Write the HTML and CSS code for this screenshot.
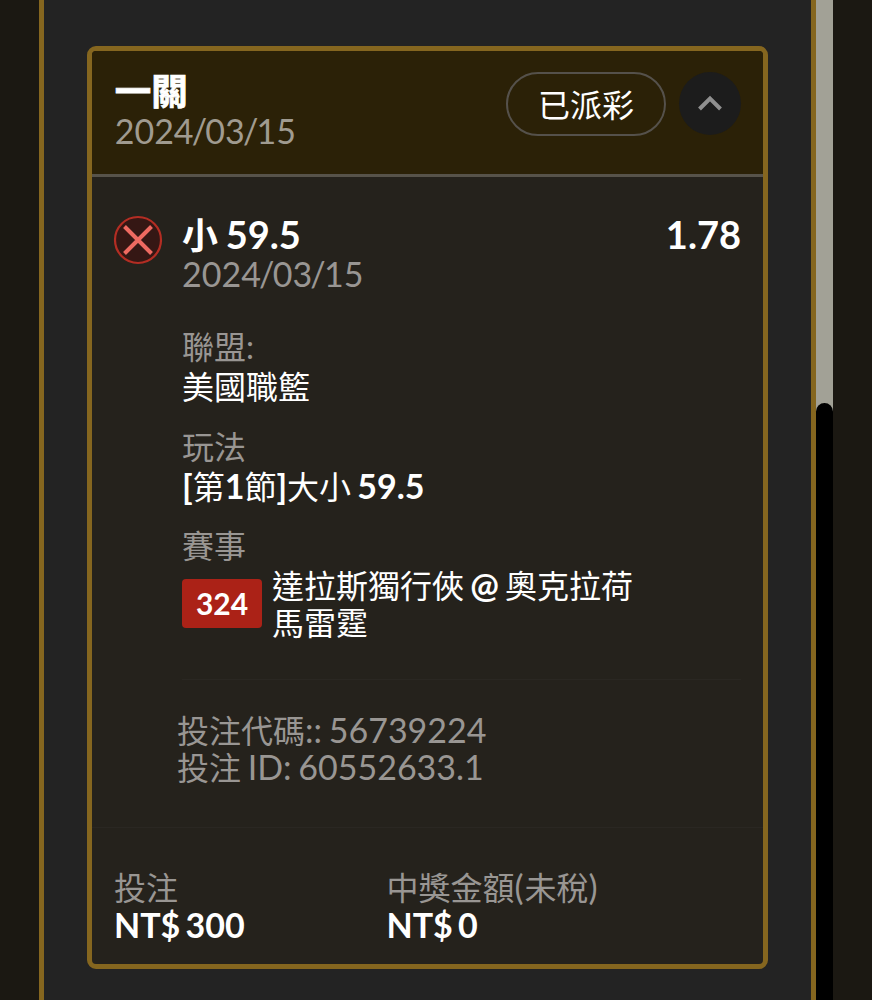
FILE: index.html
```html
<!DOCTYPE html>
<html lang="zh-Hant">
<head>
    <meta charset="UTF-8">
    <meta name="viewport" content="width=device-width, initial-scale=1.0">
    <title>投注</title>
    <link rel="stylesheet" href="styles.css">
</head>
<body>
    <main class="page">
        <div class="panel">
            <div class="card">
                <div class="card-head">
                    <div class="head-text">
                        <h1>一關</h1>
                        <p class="date">2024<i>/</i>03<i>/</i>15</p>
                    </div>
                    <span class="status">已派彩</span>
                    <button class="toggle">
                        <svg width="24" height="18" viewBox="0 0 24 18"><path d="M1.500 14 12 3.500l10.500 10.500" fill="none" stroke="#8f8f8f" stroke-width="4"/></svg>
                    </button>
                </div>

                <div class="bet">
                    <svg class="lost" width="50" height="50" viewBox="0 0 50 50">
                        <circle cx="25" cy="25" r="23" fill="#351714" stroke="#b32d23" stroke-width="2.200"/>
                        <path d="M11.500 11.500l27 27M38.500 11.500l-27 27" stroke="#ee6a61" stroke-width="4"/>
                    </svg>
                    <div class="bet-info">
                        <div class="bet-title">
                            <h2>小 <span class="num">59.5</span></h2>
                            <span class="odds">1.78</span>
                        </div>
                        <p class="date">2024<i>/</i>03<i>/</i>15</p>

                        <dl class="detail">
                            <dt>聯盟:</dt>
                            <dd>美國職籃</dd>
                            <dt>玩法</dt>
                            <dd><b>[</b>第<b>1</b>節<b>]</b>大小 <b>59.5</b></dd>
                            <dt>賽事</dt>
                            <dd class="match">
                                <span class="tag">324</span>
                                <span class="teams">達拉斯獨行俠 <b>@</b> 奧克拉荷<br>馬雷霆</span>
                            </dd>
                        </dl>

                        <div class="ids">
                            <p>投注代碼<span class="num">:: 56739224</span></p>
                            <p>投注<span class="num"> ID: 60552633.1</span></p>
                        </div>
                    </div>
                </div>

                <div class="card-foot">
                    <div class="stake">
                        <p>投注</p>
                        <strong>NT$ 300</strong>
                    </div>
                    <div class="prize">
                        <p>中獎金額<span class="num">(</span>未稅<span class="num">)</span></p>
                        <strong>NT$ 0</strong>
                    </div>
                </div>
            </div>
        </div>
        <div class="scroll">
            <div class="scroll-thumb"></div>
        </div>
    </main>
</body>
</html>
```
FILE: styles.css
```css
* {
    margin: 0;
    padding: 0;
    box-sizing: border-box;
}

body {
    background-color: #1b1812;
    color: #fff;
    font-family: Lato, "Noto Sans CJK TC", sans-serif;
    font-size: 32px;
    line-height: 37px;
    word-spacing: -2px;
}

.page {
    display: flex;
    height: 1000px;
    padding-left: 39px;
    overflow: hidden;
}

.panel {
    width: 777px;
    padding: 46px 43px 0;
    background-color: #232323;
    border: solid #85661f;
    border-width: 0 5px;
}

.card {
    height: 923px;
    background-color: #25221c;
    border: 5px solid #85661f;
    border-radius: 9px;
    overflow: hidden;
}

.card-head {
    display: flex;
    height: 126px;
    padding: 20px 22px 0 22.7px;
    background-color: #2b2107;
    border-bottom: 3px solid #57534a;
}

.head-text {
    flex: 1;
}

h1 {
    font-size: 36.5px;
    line-height: 40px;
    -webkit-text-stroke: 0.8px #fff;
}

.date {
    color: #a09b90;
    font-size: 34px;
    line-height: 40px;
}

.date i {
    margin: 0 -1.8px;
    font-style: normal;
}

.status {
    width: 160px;
    height: 64px;
    margin: 1px 13px 0 0;
    border: 2px solid #55514b;
    border-radius: 32px;
    line-height: 61px;
    text-align: center;
}

.toggle {
    display: flex;
    align-items: center;
    justify-content: center;
    width: 62px;
    height: 63px;
    margin-top: 1px;
    background-color: #1c1c1c;
    border: none;
    border-radius: 50%;
}

.bet {
    display: flex;
    height: 651px;
    padding: 38px 22px 0 21px;
    border-bottom: 1px solid #2a2722;
}

.lost {
    flex: none;
    margin-right: 19px;
}

.bet-info {
    flex: 1;
}

.bet-title {
    display: flex;
    justify-content: space-between;
    height: 39px;
}

h2,
.odds {
    font-size: 38px;
    font-weight: bold;
    line-height: 38px;
}

h2 {
    font-size: 36px;
    line-height: 40px;
    word-spacing: -1px;
}

h2 .num {
    font-size: 38px;
}

.bet .date {
    color: #999693;
}

.num,
b {
    font-size: 34px;
    line-height: 1;
}

.detail {
    padding-top: 33px;
}

dt {
    color: #999693;
    line-height: 40px;
}

dd {
    height: 59.5px;
    line-height: 40px;
}

.match {
    display: flex;
    height: 114px;
    border-bottom: 1px solid #2a2722;
}

.tag {
    width: 80px;
    height: 49px;
    margin: 13px 10px 0 0;
    background-color: #ab2217;
    border-radius: 4px;
    font-size: 30px;
    font-weight: bold;
    line-height: 49px;
    text-align: center;
}

.teams {
    width: 380px;
    padding-top: 1px;
    line-height: 37px;
}

.ids {
    margin-left: -5px;
    padding-top: 32px;
    color: #999693;
}

.ids .num {
    font-size: 34px;
}

.card-foot {
    display: flex;
    padding: 41px 22px 0;
    color: #999693;
}

.prize .num {
    letter-spacing: 0.8px;
}

.stake {
    width: 272.5px;
}

strong {
    display: block;
    color: #fff;
    font-size: 34px;
    line-height: 37px;
    word-spacing: -3px;
}

/* right hand scrollbar */
.scroll {
    width: 17px;
    padding-top: 403px;
    background-color: #a2a196;
}

.scroll-thumb {
    height: 620px;
    background-color: #000;
    border-radius: 9px;
}
```
